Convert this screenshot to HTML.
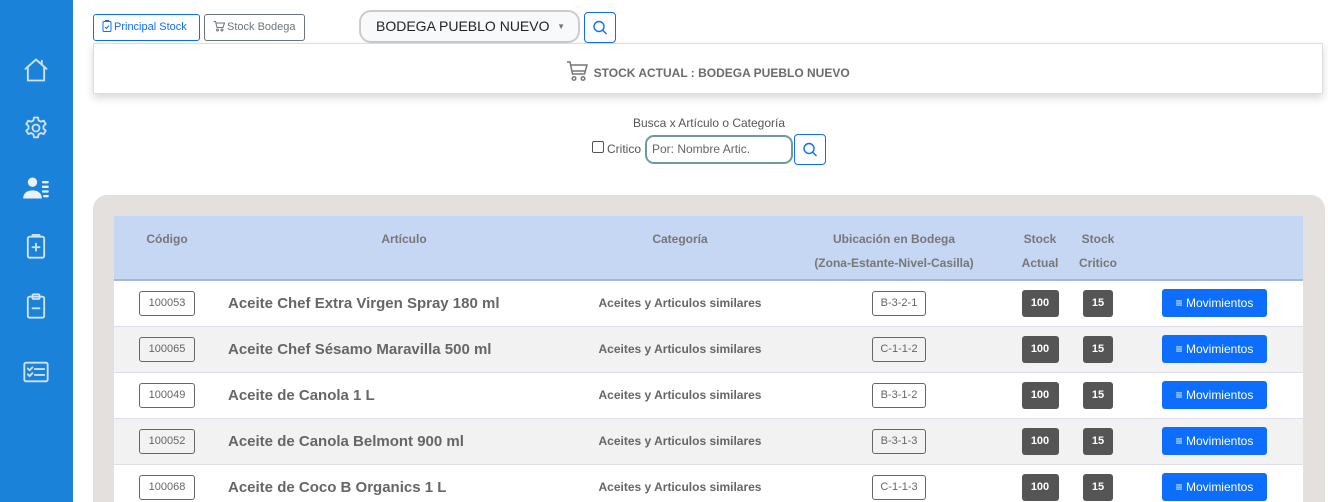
<!DOCTYPE html>
<html><head><meta charset="utf-8"><style>
*{box-sizing:border-box;margin:0;padding:0}
html,body{width:1328px;height:502px;overflow:hidden}
body{background:#fff;font-family:"Liberation Sans",sans-serif;position:relative}
.side{position:absolute;left:0;top:0;width:73px;height:502px;background:#1a83d9}
.side svg{position:absolute;left:22px;width:28px;height:28px;fill:none;stroke:#cfe2f7;stroke-width:1.6;stroke-linecap:round;stroke-linejoin:round}
.btn{position:absolute;height:27px;border:1px solid #6c757d;border-radius:3px;font-size:11px;color:#6c757d;line-height:25px;padding:0 0 0 8px;white-space:nowrap}
.btn svg{vertical-align:-2px;margin-right:2px}
.card{position:absolute;left:93px;top:43px;width:1230px;height:51px;background:#fff;border:1px solid #ddd;box-shadow:0 4px 8px rgba(0,0,0,.15);text-align:center;font-weight:bold;font-size:12px;color:#6b6b6b;line-height:58px}
.wrap{position:absolute;left:93px;top:195px;width:1232px;height:330px;background:#e4e0de;border-radius:14px}
table{position:absolute;left:114px;top:216px;width:1189px;border-collapse:collapse;table-layout:fixed}
th{background:#c5d7f2;color:#777;font-size:12px;font-weight:bold;height:64px;vertical-align:top;padding-top:11px;line-height:24px;border-bottom:2px solid #a3b8d6}
td{height:46px;border-bottom:1px solid #dde;text-align:center;color:#666;font-size:12px;font-weight:bold}
tr:nth-child(odd) td{background:#f2f2f2}
tr:nth-child(even) td{background:#fff}
.cod{display:inline-block;border:1px solid #666;border-radius:3px;width:56px;height:25px;line-height:23px;font-weight:normal;font-size:11px;color:#666}
.art{text-align:left;font-size:15px;padding-left:8px;white-space:nowrap}
.ub{display:inline-block;border:1px solid #666;border-radius:3px;width:54px;height:25px;line-height:23px;font-weight:normal;font-size:11px;color:#666}
.bd{display:inline-block;background:#555;color:#fff;border-radius:3px;height:27px;line-height:27px;font-size:11px;font-weight:bold}
.mv{display:inline-block;background:#0d6efd;color:#fff;border-radius:3px;width:105px;height:28px;line-height:28px;font-size:12px;font-weight:normal}
</style></head><body>
<div class="side">
<svg style="top:56px" viewBox="0 0 24 24"><path d="M3 11 12 3l9 8M5 9.5V21h14V9.5M17 4v3"/></svg>
<svg style="top:114px" viewBox="0 0 24 24"><circle cx="12" cy="12" r="3"/><path d="M10.3 3h3.4l.5 2.5 2 1.1 2.4-.9 1.7 2.9-1.9 1.7v2.3l1.9 1.7-1.7 2.9-2.4-.9-2 1.1-.5 2.6h-3.4l-.5-2.6-2-1.1-2.4.9-1.7-2.9 1.9-1.7v-2.3L3.7 8.6l1.7-2.9 2.4.9 2-1.1z"/></svg>
<svg style="top:174px" viewBox="0 0 24 24"><circle cx="9" cy="7" r="4" fill="#eaf2fb" stroke="none"/><path d="M1 21c0-5 4-7 8-7s8 2 8 7z" fill="#eaf2fb" stroke="none"/><path d="M18 7h4M18 11h4M18 15h4M19 19h3" stroke="#eaf2fb" stroke-width="2"/></svg>
<svg style="top:232px" viewBox="0 0 24 24"><rect x="5" y="4" width="14" height="18" rx="1.5"/><path d="M9 4V2.5h6V4M12 10v6M9 13h6"/></svg>
<svg style="top:292px" viewBox="0 0 24 24"><rect x="5" y="4" width="14" height="18" rx="1.5"/><rect x="9" y="2" width="6" height="4" rx="1"/><path d="M9 14h6"/></svg>
<svg style="top:358px" viewBox="0 0 24 24"><rect x="2" y="4" width="20" height="16" rx="1.5"/><path d="M5 9l1.5 1.5L9 8M5 14l1.5 1.5L9 13M11 9.5h8M11 14.5h8"/></svg>
</div>
<div class="btn" style="left:93px;top:14px;width:107px;border-color:#0d6efd;color:#0d6efd"><svg width="10" height="12" viewBox="0 0 10 12" fill="none" stroke="#0d6efd"><rect x="1" y="1.5" width="8" height="10" rx="1"/><path d="M3.5 1.5V.5h3v1M3 7l1.5 1.5L7 5.5"/></svg>Principal Stock</div>
<div class="btn" style="left:204px;top:14px;width:101px"><svg width="12" height="12" viewBox="0 0 12 12" fill="none" stroke="#6c757d"><path d="M.5 1.5h2l1.5 6h6l1.5-4.5H3"/><circle cx="4.5" cy="10" r="1"/><circle cx="9" cy="10" r="1"/></svg>Stock Bodega</div>
<div style="position:absolute;left:359px;top:10px;width:221px;height:33px;border:2px solid #ccc;border-radius:12px;background:#f8f9fa;font-size:14px;color:#222;line-height:29px;padding-left:15px">BODEGA PUEBLO NUEVO<span style="position:absolute;right:13px;top:0;font-size:8px;color:#777">▼</span></div>
<div style="position:absolute;left:584px;top:12px;width:32px;height:31px;border:1px solid #0d6efd;border-radius:4px"><svg width="30" height="29" viewBox="0 0 30 29" fill="none" stroke="#0d6efd" stroke-width="1.4"><circle cx="14" cy="13.5" r="5"/><path d="M17.5 17l4 4"/></svg></div>
<div class="card"><svg width="24" height="22" viewBox="0 0 24 22" fill="none" stroke="#777" stroke-width="1.5" style="vertical-align:-5px"><path d="M1 2h3l2.5 12h12l2.5-9H5M6.5 11h13"/><circle cx="8" cy="18.5" r="1.8"/><circle cx="17" cy="18.5" r="1.8"/></svg> STOCK ACTUAL : BODEGA PUEBLO NUEVO</div>
<div style="position:absolute;left:0;width:1418px;top:116px;text-align:center;font-size:12px;color:#555">Busca x Artículo o Categoría</div>
<div style="position:absolute;left:592px;top:141px;width:12px;height:12px;border:1px solid #555;border-radius:2px"></div>
<div style="position:absolute;left:607px;top:142px;font-size:12px;color:#555">Critico</div>
<div style="position:absolute;left:645px;top:135px;width:148px;height:29px;border:2px solid #6f9aa0;border-radius:9px;font-size:12px;color:#666;line-height:25px;padding-left:5px">Por: Nombre Artic.</div>
<div style="position:absolute;left:794px;top:134px;width:32px;height:31px;border:1px solid #0d6efd;border-radius:4px"><svg width="30" height="29" viewBox="0 0 30 29" fill="none" stroke="#0d6efd" stroke-width="1.4"><circle cx="14" cy="13.5" r="5"/><path d="M17.5 17l4 4"/></svg></div>
<div class="wrap"></div>
<table>
<colgroup><col style="width:106px"><col style="width:368px"><col style="width:184px"><col style="width:244px"><col style="width:48px"><col style="width:68px"><col></colgroup>
<tr><th>Código</th><th>Artículo</th><th>Categoría</th><th>Ubicación en Bodega<br>(Zona-Estante-Nivel-Casilla)</th><th>Stock<br>Actual</th><th>Stock<br>Critico</th><th></th></tr>
<tr><td><span class="cod">100053</span></td><td class="art">Aceite Chef Extra Virgen Spray 180 ml</td><td>Aceites y Articulos similares</td><td style="padding-left:10px"><span class="ub">B-3-2-1</span></td><td><span class="bd" style="width:37px">100</span></td><td><span class="bd" style="width:30px">15</span></td><td style="padding-right:6px"><span class="mv">≡ Movimientos</span></td></tr>
<tr><td><span class="cod">100065</span></td><td class="art">Aceite Chef Sésamo Maravilla 500 ml</td><td>Aceites y Articulos similares</td><td style="padding-left:10px"><span class="ub">C-1-1-2</span></td><td><span class="bd" style="width:37px">100</span></td><td><span class="bd" style="width:30px">15</span></td><td style="padding-right:6px"><span class="mv">≡ Movimientos</span></td></tr>
<tr><td><span class="cod">100049</span></td><td class="art">Aceite de Canola 1 L</td><td>Aceites y Articulos similares</td><td style="padding-left:10px"><span class="ub">B-3-1-2</span></td><td><span class="bd" style="width:37px">100</span></td><td><span class="bd" style="width:30px">15</span></td><td style="padding-right:6px"><span class="mv">≡ Movimientos</span></td></tr>
<tr><td><span class="cod">100052</span></td><td class="art">Aceite de Canola Belmont 900 ml</td><td>Aceites y Articulos similares</td><td style="padding-left:10px"><span class="ub">B-3-1-3</span></td><td><span class="bd" style="width:37px">100</span></td><td><span class="bd" style="width:30px">15</span></td><td style="padding-right:6px"><span class="mv">≡ Movimientos</span></td></tr>
<tr><td><span class="cod">100068</span></td><td class="art">Aceite de Coco B Organics 1 L</td><td>Aceites y Articulos similares</td><td style="padding-left:10px"><span class="ub">C-1-1-3</span></td><td><span class="bd" style="width:37px">100</span></td><td><span class="bd" style="width:30px">15</span></td><td style="padding-right:6px"><span class="mv">≡ Movimientos</span></td></tr>
</table>
</body></html>
